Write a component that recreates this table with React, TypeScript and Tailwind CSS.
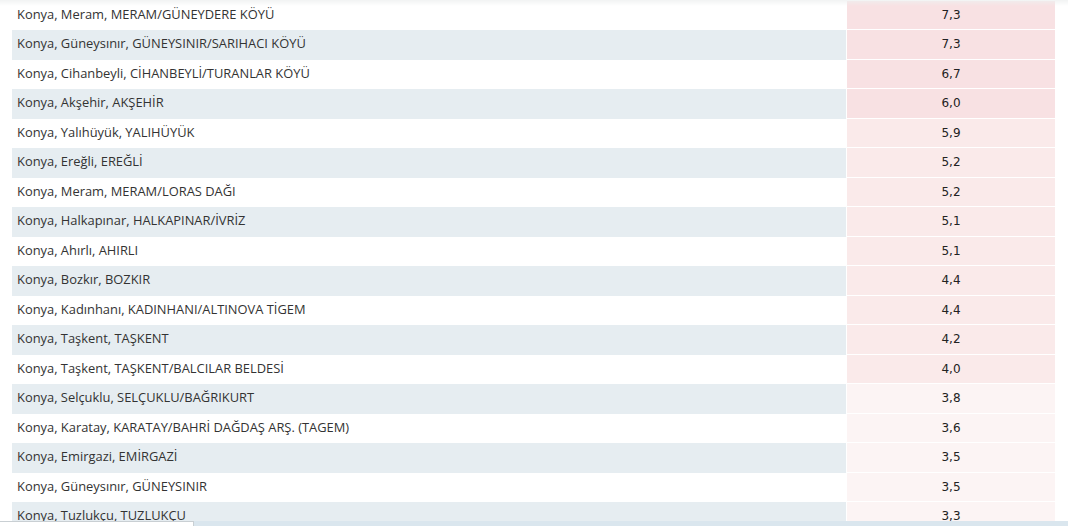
const rows: [string, string][] = [
  ['Konya, Meram, MERAM/GÜNEYDERE KÖYÜ', '7,3'],
  ['Konya, Güneysınır, GÜNEYSINIR/SARIHACI KÖYÜ', '7,3'],
  ['Konya, Cihanbeyli, CİHANBEYLİ/TURANLAR KÖYÜ', '6,7'],
  ['Konya, Akşehir, AKŞEHİR', '6,0'],
  ['Konya, Yalıhüyük, YALIHÜYÜK', '5,9'],
  ['Konya, Ereğli, EREĞLİ', '5,2'],
  ['Konya, Meram, MERAM/LORAS DAĞI', '5,2'],
  ['Konya, Halkapınar, HALKAPINAR/İVRİZ', '5,1'],
  ['Konya, Ahırlı, AHIRLI', '5,1'],
  ['Konya, Bozkır, BOZKIR', '4,4'],
  ['Konya, Kadınhanı, KADINHANI/ALTINOVA TİGEM', '4,4'],
  ['Konya, Taşkent, TAŞKENT', '4,2'],
  ['Konya, Taşkent, TAŞKENT/BALCILAR BELDESİ', '4,0'],
  ['Konya, Selçuklu, SELÇUKLU/BAĞRIKURT', '3,8'],
  ['Konya, Karatay, KARATAY/BAHRİ DAĞDAŞ ARŞ. (TAGEM)', '3,6'],
  ['Konya, Emirgazi, EMİRGAZİ', '3,5'],
  ['Konya, Güneysınır, GÜNEYSINIR', '3,5'],
  ['Konya, Tuzlukçu, TUZLUKÇU', '3,3'],
]

// shade of the value cell by amount
function cellColor(v: string) {
  const n = parseFloat(v.replace(',', '.'))
  if (n >= 6) return 'bg-[#f8e1e3]'
  if (n >= 4) return 'bg-[#faeaea]'
  return 'bg-[#fcf4f4]'
}

export default function App() {
  return (
    <div className="relative h-[526px] w-[1068px] overflow-hidden bg-white">
      <div className="pl-3 pr-[13px] pt-[0.5px]">
        {rows.map(([name, val], i) => (
          <div key={i} className={`flex h-[29.5px] ${i % 2 === 1 ? 'bg-[#e6edf1]' : 'bg-white'}`}>
            <div className="flex flex-1 items-center pb-[2px] pl-[5px] text-[12.9px] text-[#333] font-['Open_Sans',sans-serif]">
              {name}
            </div>
            <div className="w-[1px] bg-white" />
            <div className={`flex w-[208px] items-center justify-center border-b border-white text-[12px] text-[#222] font-['DejaVu_Sans',sans-serif] ${cellColor(val)}`}>
              {val}
            </div>
          </div>
        ))}
      </div>

      {/* faint top shade */}
      <div className="pointer-events-none absolute inset-x-0 top-0 h-[6px] bg-gradient-to-b from-[#eef0f0]/80 to-transparent" />

      {/* bottom strip */}
      <div className="absolute inset-x-0 bottom-0 flex h-[5px]">
        <div className="w-[194px] border-t border-r border-[#c9cfd3] bg-white" />
        <div className="flex-1 bg-[#dae6ee]" />
      </div>
    </div>
  )
}
